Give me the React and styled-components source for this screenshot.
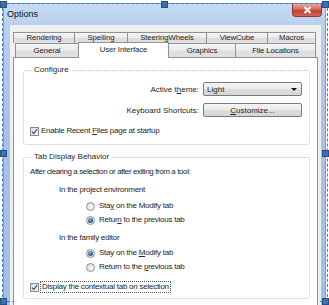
import React from "react";
import styled, { createGlobalStyle } from "styled-components";

const GlobalStyle = createGlobalStyle`
  html, body {
    margin: 0;
    padding: 0;
    background: #ffffff;
  }
  body {
    font-family: "Liberation Sans", Arial, sans-serif;
    font-size: 8px;
    color: #262626;
  }
`;

const Canvas = styled.div`
  position: relative;
  width: 329px;
  height: 305px;
  overflow: hidden;
  padding: 3px 0 0 3px;
  box-sizing: border-box;
`;

const Window = styled.div`
  width: 323px;
  height: 320px;
  box-sizing: border-box;
  border: 1px solid #7f9dc3;
  border-radius: 6px 6px 0 0;
  background: linear-gradient(180deg, #c6daf2 0px, #b9d0ee 22px, #a9c3e7 120px, #a3bfe4 100%);
  display: flex;
  flex-direction: column;
`;

const TitleBar = styled.div`
  height: 21px;
  display: flex;
  justify-content: space-between;
  padding: 0 3px 0 3px;
`;

const Title = styled.div`
  font-size: 9px;
  line-height: 21px;
  color: #101010;
`;

const CloseButton = styled.div`
  width: 30px;
  height: 13px;
  box-sizing: border-box;
  border: 1px solid #8d3b33;
  border-top: none;
  border-radius: 0 0 4px 4px;
  background: linear-gradient(180deg, #e8a89e 0%, #d4685a 45%, #c2402f 55%, #d0665a 100%);
  display: flex;
  align-items: center;
  justify-content: center;
`;

const Frame = styled.div`
  flex: 1;
  padding: 0 4px 0 6px;
  display: flex;
`;

const Body = styled.div`
  flex: 1;
  background: #f0f0f0;
  padding: 7px 3px 0 3px;
  display: flex;
  flex-direction: column;
`;

const TabRow = styled.div`
  display: flex;
  align-items: flex-end;
  padding-left: ${p => p.$inset}px;
  height: ${p => p.$h}px;
  position: relative;
`;

const Tab = styled.div`
  width: ${p => p.$w}px;
  height: ${p => p.$h}px;
  box-sizing: border-box;
  border: 1px solid #8e9199;
  border-bottom: none;
  margin-right: -1px;
  padding-bottom: ${p => p.$pb || 0}px;
  background: linear-gradient(180deg, #f6f6f6 0%, #eaeaea 50%, #dcdcdc 51%, #e2e2e2 100%);
  display: flex;
  align-items: center;
  justify-content: center;
  font-size: 7.8px;
  line-height: 9px;
  letter-spacing: -0.1px;
  white-space: nowrap;
  color: #262626;
`;

const ActiveTab = styled(Tab)`
  background: #ffffff;
  margin-top: -1px;
  margin-bottom: -1px;
  position: relative;
  z-index: 2;
  padding-bottom: 2px;
`;

const Panel = styled.div`
  flex: 1;
  background: #ffffff;
  border: 1px solid #8e9199;
  padding: 7px 7px 0 9px;
  position: relative;
  z-index: 1;
`;

const Group = styled.fieldset`
  margin: 0 0 7px 0;
  padding: ${p => p.$pt}px 6px ${p => p.$pb}px 6px;
  border: 1px dotted #b9c4cf;
  border-radius: 3px;
  min-width: 0;
`;

const Legend = styled.legend`
  padding: 0 2px;
  margin-left: 2px;
  line-height: 10px;
  height: 10px;
`;

const FormRow = styled.div`
  display: grid;
  grid-template-columns: 169px 99px;
  column-gap: 4px;
  align-items: center;
  margin-top: ${p => p.$mt || 0}px;
`;

const FieldLabel = styled.div`
  text-align: right;
  white-space: nowrap;
`;

const Select = styled.div`
  height: 14px;
  box-sizing: border-box;
  border: 1px solid #7a7a7a;
  border-radius: 2px;
  background: linear-gradient(180deg, #f4f4f4 0%, #ebebeb 50%, #dddddd 51%, #d6d6d6 100%);
  display: flex;
  align-items: center;
  justify-content: space-between;
  padding: 0 4px 0 3px;
`;

const Arrow = styled.span`
  width: 0;
  height: 0;
  border-left: 3px solid transparent;
  border-right: 3px solid transparent;
  border-top: 3px solid #111;
`;

const Button = styled.div`
  height: 14px;
  box-sizing: border-box;
  border: 1px solid #7a7a7a;
  border-radius: 2px;
  background: linear-gradient(180deg, #f4f4f4 0%, #ebebeb 50%, #dddddd 51%, #d6d6d6 100%);
  display: flex;
  align-items: center;
  justify-content: center;
`;

const Line = styled.div`
  display: flex;
  align-items: center;
  height: 10px;
  line-height: 10px;
  white-space: nowrap;
  letter-spacing: ${p => p.$tight ? -0.4 : -0.25}px;
  margin-top: ${p => p.$mt || 0}px;
  padding-left: ${p => p.$indent || 0}px;
  gap: 2px;
`;

const Box = styled.span`
  width: 9px;
  height: 9px;
  box-sizing: border-box;
  border: 1px solid #8a8a8a;
  background: linear-gradient(135deg, #dcdcdc 0%, #f6f6f6 100%);
  display: inline-flex;
  align-items: center;
  justify-content: center;
  flex: none;
`;

const Radio = styled.span`
  width: 9px;
  height: 9px;
  box-sizing: border-box;
  border: 1px solid #8f8f8f;
  border-radius: 50%;
  background: radial-gradient(circle at 60% 60%, #f8f8f8 0%, #d6d6d6 100%);
  display: inline-flex;
  align-items: center;
  justify-content: center;
  margin-right: 2px;
  flex: none;
  &::after {
    content: "";
    display: ${p => (p.$on ? "block" : "none")};
    width: 5px;
    height: 5px;
    border-radius: 50%;
    background: radial-gradient(circle at 40% 35%, #8fb8e0 0%, #24619f 55%, #143f73 100%);
  }
`;

const Focus = styled.span`
  outline: 1px dotted #555;
  outline-offset: 0;
  line-height: 10px;
  padding: 0 1px;
`;

const Selection = styled.div`
  position: absolute;
  left: 2px;
  top: 3px;
  right: 1px;
  bottom: 3px;
  border: 1px dashed #3d7bd4;
  pointer-events: none;
`;

const Handle = styled.span`
  position: absolute;
  width: 5px;
  height: 5px;
  background: #3f6ea9;
  border: 1px solid #24518a;
  left: ${p => p.$x}px;
  top: ${p => p.$y}px;
`;

const Check = () => (
  <svg width="7" height="7" viewBox="0 0 7 7">
    <path d="M1 3.6 L2.8 5.6 L6.2 1" fill="none" stroke="#3a4f86" strokeWidth="1.2" />
  </svg>
);

const CloseX = () => (
  <svg width="9" height="8" viewBox="0 0 9 8">
    <path d="M1.5 1 L7.5 7 M7.5 1 L1.5 7" stroke="#ffffff" strokeWidth="2" />
  </svg>
);

const backTabs = [
  ["Rendering", 62],
  ["Spelling", 54],
  ["SteeringWheels", 80],
  ["ViewCube", 62],
  ["Macros", 49],
];

const handles = [
  [0, 1], [161, 1], [322, 1],
  [0, 150], [322, 150],
  [0, 298], [161, 298], [322, 298],
];

export default function App() {
  return (
    <>
      <GlobalStyle />
      <Canvas>
        <Window>
          <TitleBar>
            <Title>Options</Title>
            <CloseButton>
              <CloseX />
            </CloseButton>
          </TitleBar>
          <Frame>
            <Body>
              <TabRow $h={11} $inset={0}>
                {backTabs.map(([label, w]) => (
                  <Tab key={label} $w={w} $h={11} $pb={1}>{label}</Tab>
                ))}
              </TabRow>
              <TabRow $h={14} $inset={2}>
                <Tab $w={64} $h={14}>General</Tab>
                <ActiveTab $w={91} $h={16}>User Interface</ActiveTab>
                <Tab $w={68} $h={14}>Graphics</Tab>
                <Tab $w={81} $h={14}>File Locations</Tab>
              </TabRow>
              <Panel>
                <Group $pt={7} $pb={8}>
                  <Legend>Configure</Legend>
                  <FormRow>
                    <FieldLabel>Active t<u>h</u>eme:</FieldLabel>
                    <Select>
                      <span>Light</span>
                      <Arrow />
                    </Select>
                  </FormRow>
                  <FormRow $mt={7}>
                    <FieldLabel>Keyboard Shortcuts:</FieldLabel>
                    <Button>
                      <span><u>C</u>ustomize...</span>
                    </Button>
                  </FormRow>
                  <Line $mt={9}>
                    <Box><Check /></Box>
                    <span>Enable Recent <u>F</u>iles page at startup</span>
                  </Line>
                </Group>
                <Group $pt={5} $pb={6}>
                  <Legend>Tab Display Behavior</Legend>
                  <Line $tight>After clearing a selection or after exiting from a tool:</Line>
                  <Line $mt={8} $indent={29}>In the project environment</Line>
                  <Line $mt={6} $indent={56}>
                    <Radio />
                    <span>Sta<u>y</u> on the Modify tab</span>
                  </Line>
                  <Line $mt={4} $indent={56}>
                    <Radio $on />
                    <span>Retur<u>n</u> to the previous tab</span>
                  </Line>
                  <Line $mt={8} $indent={29}>In the family editor</Line>
                  <Line $mt={5} $indent={56}>
                    <Radio $on />
                    <span>Stay on the <u>M</u>odify tab</span>
                  </Line>
                  <Line $mt={4} $indent={56}>
                    <Radio />
                    <span>Return to the <u>p</u>revious tab</span>
                  </Line>
                  <Line $mt={10} $indent={0}>
                    <Box><Check /></Box>
                    <Focus>Display the contextual tab on selection</Focus>
                  </Line>
                </Group>
              </Panel>
            </Body>
          </Frame>
        </Window>
        <Selection />
        {handles.map(([x, y]) => (
          <Handle key={`${x}-${y}`} $x={x} $y={y} />
        ))}
      </Canvas>
    </>
  );
}
